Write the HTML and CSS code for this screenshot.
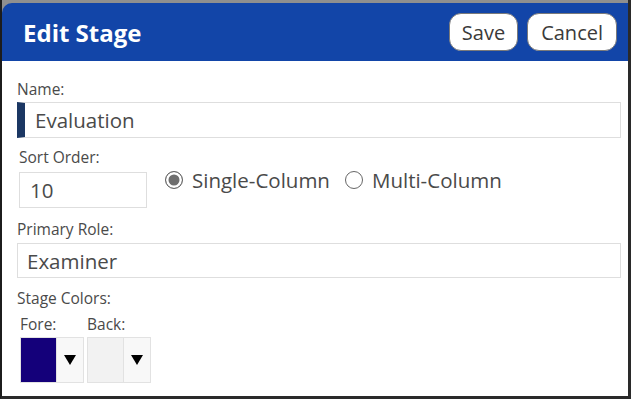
FILE: index.html
```html
<!DOCTYPE html>
<html lang="en">
<head>
  <meta charset="UTF-8">
  <title>Edit Stage</title>
  <link rel="stylesheet" href="styles.css">
</head>
<body>
  <div class="dialog">
    <div class="dialog-header">
      <h1 class="dialog-title">Edit Stage</h1>
      <div class="header-buttons">
        <button class="header-btn">Save</button>
        <button class="header-btn">Cancel</button>
      </div>
    </div>

    <div class="dialog-body">
      <div class="field-label">Name:</div>
      <div class="text-input name-input">Evaluation</div>

      <div class="sort-row">
        <div class="sort-field">
          <div class="field-label">Sort Order:</div>
          <div class="text-input sort-input">10</div>
        </div>
        <div class="radio-group">
          <label class="radio-option"><span class="radio-dot checked"></span>Single-Column</label>
          <label class="radio-option"><span class="radio-dot"></span>Multi-Column</label>
        </div>
      </div>

      <div class="field-label role-label">Primary Role:</div>
      <div class="text-input role-input">Examiner</div>

      <div class="field-label colors-label">Stage Colors:</div>
      <div class="color-row">
        <div class="color-field">
          <div class="field-label">Fore:</div>
          <div class="color-picker">
            <span class="swatch fore-swatch"></span>
            <span class="picker-arrow"></span>
          </div>
        </div>
        <div class="color-field">
          <div class="field-label">Back:</div>
          <div class="color-picker">
            <span class="swatch back-swatch"></span>
            <span class="picker-arrow"></span>
          </div>
        </div>
      </div>
    </div>
  </div>
</body>
</html>
```

FILE: styles.css
```css
body {
  margin: 0;
  font-family: "Open Sans", "Noto Sans", sans-serif;
  background-color: #fff;
}

.dialog {
  box-sizing: border-box;
  width: 631px;
  height: 399px;
  display: flex;
  flex-direction: column;
  background-color: #8f8f8f;
  border-left: 2px solid #1c1c1c;
  border-right: 3px solid #2a2a2a;
  border-bottom: 3px solid #2a2a2a;
  padding-top: 3px;
}

.dialog-header {
  height: 58px;
  display: flex;
  align-items: center;
  justify-content: space-between;
  background-color: #1245a8;
  border-top-left-radius: 10px;
  padding: 0 11px 0 21px;
}

.dialog-title {
  margin: 0;
  color: #fff;
  font-size: 24px;
  font-weight: 700;
}

.header-buttons {
  display: flex;
  gap: 9px;
}

.header-btn {
  height: 38px;
  padding: 0 12px;
  background-color: #fff;
  border: 1px solid #7a7a7a;
  border-radius: 12px;
  font-family: inherit;
  font-size: 20px;
  color: #3a3a3a;
}

.header-btn + .header-btn {
  padding: 0 13px;
}

.dialog-body {
  flex: 1;
  background-color: #fff;
  padding: 18px 7px 0 15px;
}

.field-label {
  font-size: 15.5px;
  line-height: 20px;
  color: #4a4a4a;
}

.text-input {
  box-sizing: border-box;
  border: 1px solid #dedede;
  color: #4a4a4a;
  font-size: 20.5px;
  display: flex;
  align-items: center;
}

.name-input {
  margin-top: 3px;
  height: 36px;
  padding-left: 10px;
  border-left: 8px solid #1b3763;
}

.sort-row {
  display: flex;
  align-items: flex-start;
  margin-top: 9px;
}

.sort-field {
  margin-left: 2px;
}

.sort-input {
  margin-top: 5px;
  width: 128px;
  height: 36px;
  padding-left: 10px;
}

.radio-group {
  display: flex;
  gap: 15px;
  margin: 19px 0 0 18px;
}

.radio-option {
  display: flex;
  align-items: center;
  gap: 9px;
  font-size: 20.5px;
  color: #4a4a4a;
}

.radio-dot {
  box-sizing: border-box;
  width: 18px;
  height: 18px;
  border: 1.5px solid #666;
  border-radius: 50%;
}

.radio-dot.checked {
  background-color: #6e6e6e;
  box-shadow: inset 0 0 0 2.5px #fff;
}

.role-label {
  margin-top: 11px;
}

.role-input {
  margin-top: 4px;
  height: 35px;
  padding-left: 9px;
}

.colors-label {
  margin-top: 10px;
}

.color-row {
  display: flex;
  gap: 3px;
  margin-top: 6px;
  margin-left: 3px;
}

.color-picker {
  margin-top: 3px;
  display: flex;
  height: 46px;
  border: 1px solid #e2e2e2;
  box-sizing: border-box;
}

.swatch {
  width: 35px;
  border-right: 1px solid #e2e2e2;
}

.fore-swatch {
  background-color: #14007a;
}

.back-swatch {
  background-color: #f2f2f2;
}

.picker-arrow {
  width: 26px;
  display: flex;
  align-items: center;
  justify-content: center;
  background-color: #f8f8f8;
}

.picker-arrow::before {
  content: "";
  border-left: 6px solid transparent;
  border-right: 6px solid transparent;
  border-top: 10px solid #000;
}
```
